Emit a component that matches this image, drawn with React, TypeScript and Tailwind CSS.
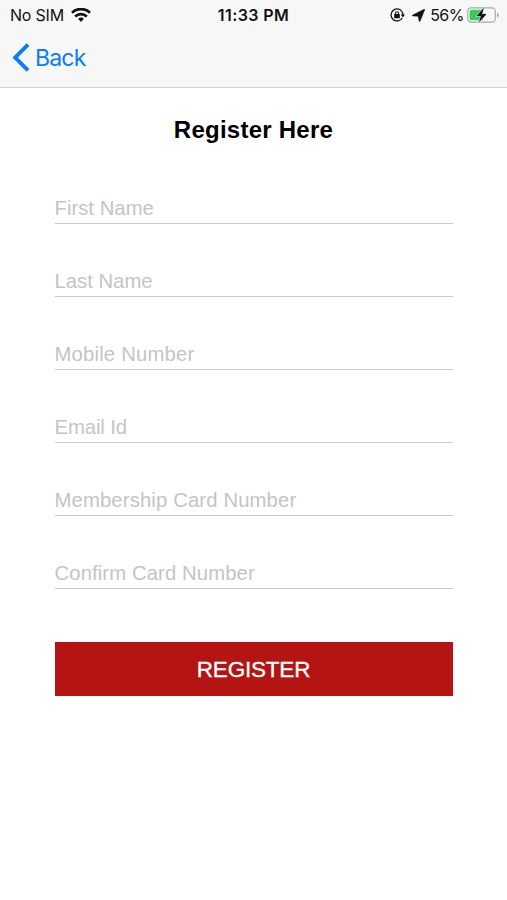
import React from "react";

const fields = [
  { name: "firstName", label: "First Name", type: "text", spacing: "tracking-[0.02px]" },
  { name: "lastName", label: "Last Name", type: "text", spacing: "tracking-[0px]" },
  { name: "mobile", label: "Mobile Number", type: "tel", spacing: "tracking-[0.18px]" },
  { name: "email", label: "Email Id", type: "email", spacing: "tracking-[-0.1px]" },
  { name: "card", label: "Membership Card Number", type: "text", spacing: "tracking-[0.13px]" },
  { name: "confirmCard", label: "Confirm Card Number", type: "text", spacing: "tracking-[0.1px]" },
];

const WifiIcon = () => (
  <svg width="20" height="14" viewBox="0 0 20 14" fill="none" stroke="#111" strokeWidth="2.8">
    <path d="M1 4.7a13 13 0 0 1 18 0" />
    <path d="M4.2 8.4a8.4 8.4 0 0 1 11.6 0" />
    <path d="M7.1 10.8a4.3 4.3 0 0 1 5.8 0L10 13.9z" fill="#111" stroke="none" />
  </svg>
);

const RotationLockIcon = () => (
  <svg width="15" height="14" viewBox="0 0 15 14" fill="none" stroke="#111">
    <path d="M11.8 3.3A6 6 0 1 0 12.2 10" strokeWidth="1.3" />
    <path d="M11.8 3.3A6 6 0 0 1 13 7" strokeWidth="1.3" />
    <path d="M10.7 6.6h4.2l-2.1 3z" fill="#111" stroke="none" />
    <rect x="4.2" y="6" width="5.6" height="4.3" rx="0.5" fill="#111" stroke="none" />
    <path d="M5.5 6.5V5.2a1.5 1.5 0 0 1 3 0v1.3" strokeWidth="1.1" />
  </svg>
);

const LocationIcon = () => (
  <svg width="13" height="13" viewBox="0 0 13 13" fill="#111">
    <path d="M12.2.2Q13 0 12.7.8L8 12.3q-.5.9-.8-.1L6.2 7.3.9 6.9q-1.2-.3-.1-.9z" stroke="#111" strokeWidth="0.5" />
  </svg>
);

const BatteryIcon = () => (
  <svg width="33" height="16" viewBox="0 0 33 16" fill="none">
    <rect x="0.7" y="0.9" width="27.6" height="14.2" rx="3.6" stroke="#aaa" strokeWidth="1.2" />
    <path d="M30 5.4c2.3.7 2.3 4.5 0 5.2z" fill="#aaa" />
    <path d="M4.6 2.7H16v10.6H4.6a2 2 0 0 1-2-2V4.7a2 2 0 0 1 2-2z" fill="#35ca5a" />
    <path d="M16.4 1.6 10 9h4.2l-1.8 5.6 6.7-7.3h-4.4z" fill="#111" stroke="#f7f7f7" strokeWidth="1.4" paintOrder="stroke" />
    <path d="M16.4 1.6 10 9h4.2l-1.8 5.6 6.7-7.3h-4.4z" fill="#111" stroke="#111" strokeWidth="0.4" />
  </svg>
);

const StatusBar = () => (
  <div className="grid h-[30px] grid-cols-[1fr_auto_1fr] items-center font-['Inter',sans-serif] text-[16px] leading-[30px] text-[#111]">
    <div className="flex items-center gap-[7px] pl-[10px]">
      <span className="tracking-[-0.2px]">No SIM</span>
      <WifiIcon />
    </div>
    <span className="font-semibold tracking-[0.4px]">11:33 PM</span>
    <div className="flex items-center justify-end pr-[7px]">
      <RotationLockIcon />
      <span className="ml-[7px]"><LocationIcon /></span>
      <span className="ml-[5px] tracking-[-0.5px]">56%</span>
      <span className="ml-[3px]"><BatteryIcon /></span>
    </div>
  </div>
);

const App: React.FC = () => {
  return (
    <div className="min-h-[900px] w-full bg-white">
      <header className="h-[88px] border-b border-[#d2d2d2] bg-[#f7f7f7]">
        <StatusBar />
        <button type="button" className="flex h-[55px] items-center gap-[5px] pl-[12px] text-[#087cff]">
          <svg width="18" height="29" viewBox="0 0 18 29" fill="none" stroke="currentColor" strokeWidth="3.9">
            <path d="M16 1.6 3.2 14.5 16 27.4" />
          </svg>
          <span className="font-['Inter',sans-serif] text-[23px] leading-[30px] tracking-[-0.8px]">Back</span>
        </button>
      </header>

      <form className="flex flex-col px-[54.5px] font-['Liberation_Sans',Arial,sans-serif]" onSubmit={(e) => e.preventDefault()}>
        <h1 className="mt-[27px] text-center text-[24px] leading-[30px] font-bold tracking-[0.25px] text-black">
          Register Here
        </h1>

        <div className="mt-[46px] flex flex-col gap-[40px]">
          {fields.map((field) => (
            <input
              key={field.name}
              name={field.name}
              type={field.type}
              placeholder={field.label}
              className={`h-[33px] w-full border-b-[1.5px] border-[#cbcbcb] pt-[3px] text-[20.3px] outline-none placeholder:text-[#c4c4c6] ${field.spacing}`}
            />
          ))}
        </div>

        <button type="submit" className="mt-[53px] h-[54px] w-full bg-[#b51512] pt-[2px] text-[22.5px] tracking-[-0.2px] text-white [-webkit-text-stroke:0.3px_white]">
          REGISTER
        </button>
      </form>
    </div>
  );
};

export default App;
